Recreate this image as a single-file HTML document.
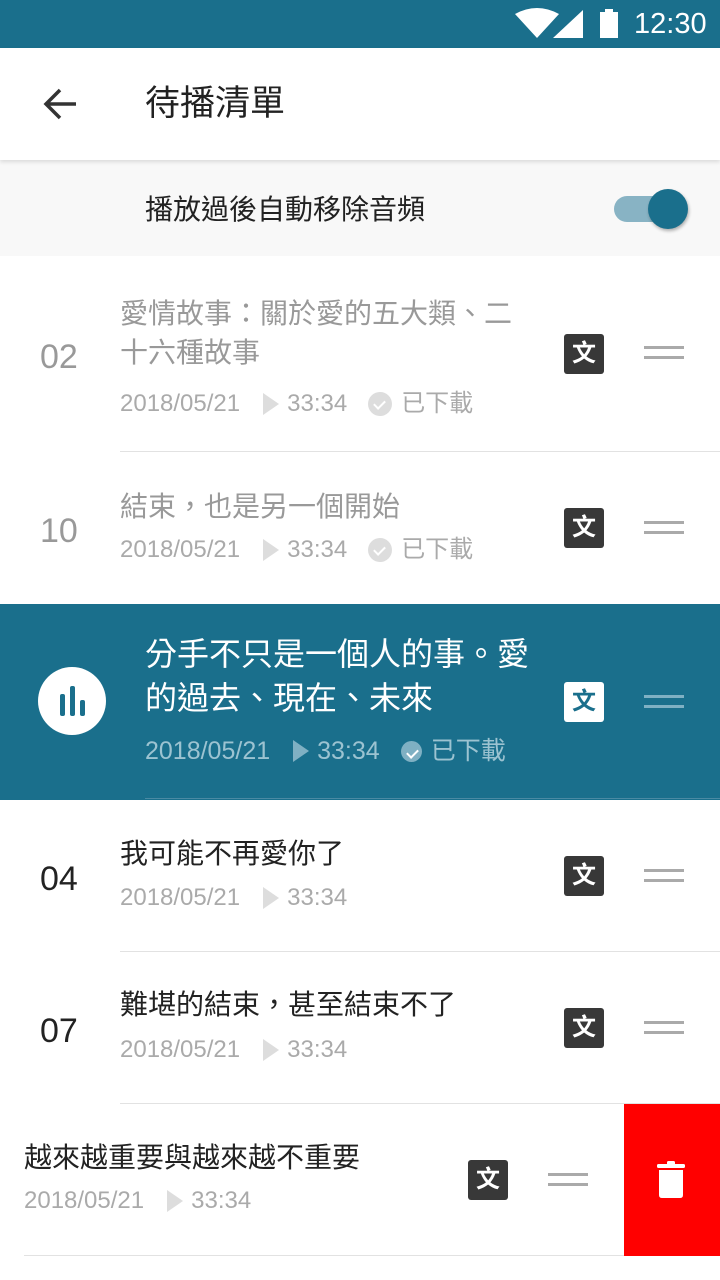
<!DOCTYPE html>
<html><head><meta charset="utf-8">
<style>
*{margin:0;padding:0;box-sizing:border-box}
body{width:720px;height:1280px;position:relative;overflow:hidden;background:#fff;font-family:"Liberation Sans","Noto Sans CJK TC",sans-serif}
.a{position:absolute;white-space:nowrap}
.t{font-size:28px;line-height:39px}
.m{font-size:24px;line-height:30px;color:#aaa;display:flex;align-items:center}
.num{font-size:34px;line-height:40px}
.wen{position:absolute;width:40px;height:40px;background:#383838;border-radius:3px;color:#fff;font-size:24px;font-weight:bold;text-align:center;line-height:40px}
.drag{position:absolute;width:40px;height:13px;border-top:3px solid #aaa;border-bottom:3px solid #aaa}
.div{position:absolute;height:1px;background:#e2e2e2}
.play{display:inline-block;width:0;height:0;border-left:16px solid #ddd;border-top:11px solid transparent;border-bottom:11px solid transparent;margin:0 8px 0 23px}
.chk{display:inline-block;width:24px;height:24px;border-radius:50%;background:#ddd;margin:0 9px 0 21px;position:relative}
.chk:after{content:"";position:absolute;left:8px;top:6px;width:5px;height:9px;border:solid #fff;border-width:0 2px 2px 0;transform:rotate(45deg)}
</style></head><body>
<div class="a" style="left:0;top:0;width:720px;height:48px;background:#1a6f8c"></div>
<svg class="a" style="left:510px;top:8px" width="200" height="32">
<path d="M5 6 Q27 -6 49 6 L27 30 Z" fill="#fff"/>
<path d="M43 30 L73 30 L73 2 Z" fill="#fff"/>
<rect x="90" y="4" width="18" height="26" fill="#fff"/><rect x="95" y="1" width="8" height="4" fill="#fff"/>
</svg>
<div class="a" style="left:634px;top:6px;font-size:29px;color:#fff;line-height:36px">12:30</div>
<div class="a" style="left:0;top:48px;width:720px;height:112px;background:#fff;box-shadow:0 2px 4px rgba(0,0,0,.12);z-index:2"></div>
<svg class="a" style="left:40px;top:86px;z-index:3" width="40" height="36"><path d="M36 18 H6 M20 4 L6 18 L20 32" stroke="#333" stroke-width="3.5" fill="none"/></svg>
<div class="a" style="left:145px;top:81px;font-size:35px;line-height:46px;color:#222;z-index:3">待播清單</div>
<div class="a" style="left:0;top:160px;width:720px;height:96px;background:#f8f8f8"></div>
<div class="a" style="left:145px;top:192px;font-size:28px;line-height:36px;color:#222">播放過後自動移除音頻</div>
<div class="a" style="left:614px;top:196px;width:56px;height:26px;border-radius:13px;background:#88b3c4"></div>
<div class="a" style="left:648px;top:189px;width:40px;height:40px;border-radius:50%;background:#1a6f8c;box-shadow:1px 2px 3px rgba(0,0,0,.3)"></div>

<div class="a num" style="left:40px;top:337px;color:#999">02</div>
<div class="a t" style="left:120px;top:294px;color:#999">愛情故事：關於愛的五大類、二<br>十六種故事</div>
<div class="a m" style="left:120px;top:389px">2018/05/21<span class="play"></span>33:34<span class="chk"></span>已下載</div>
<div class="wen" style="left:564px;top:334px">文</div><div class="drag" style="left:644px;top:346px"></div>
<div class="div" style="left:120px;top:451px;width:600px"></div>

<div class="a num" style="left:40px;top:511px;color:#999">10</div>
<div class="a t" style="left:120px;top:487px;color:#999">結束，也是另一個開始</div>
<div class="a m" style="left:120px;top:535px">2018/05/21<span class="play"></span>33:34<span class="chk"></span>已下載</div>
<div class="wen" style="left:564px;top:508px">文</div><div class="drag" style="left:644px;top:521px"></div>

<div class="a" style="left:0;top:604px;width:720px;height:196px;background:#1a6f8c"></div>
<div class="a" style="left:38px;top:667px;width:68px;height:68px;border-radius:50%;background:#fff"></div>
<div class="a" style="left:60px;top:694px;width:5px;height:22px;border-radius:2px;background:#1a6f8c"></div>
<div class="a" style="left:70px;top:686px;width:5px;height:30px;border-radius:2px;background:#1a6f8c"></div>
<div class="a" style="left:80px;top:700px;width:5px;height:16px;border-radius:2px;background:#1a6f8c"></div>
<div class="a" style="left:145px;top:632px;font-size:32px;line-height:44px;color:#fff">分手不只是一個人的事。愛<br>的過去、現在、未來</div>
<div class="a m" style="left:145px;top:736px;color:#9cc3d1;font-size:25px">2018/05/21<span class="play" style="border-left-color:#7fb0c3"></span>33:34<span class="chk" style="background:#7fb0c3;width:21px;height:21px"></span>已下載</div>
<div class="wen" style="left:564px;top:682px;background:#fff;color:#1a6f8c">文</div><div class="drag" style="left:644px;top:695px;border-color:#7fb0c3"></div>
<div class="div" style="left:145px;top:798px;width:575px;background:#4a8aa3"></div>

<div class="a num" style="left:40px;top:859px;color:#222">04</div>
<div class="a t" style="left:120px;top:834px;color:#222">我可能不再愛你了</div>
<div class="a m" style="left:120px;top:883px">2018/05/21<span class="play"></span>33:34</div>
<div class="wen" style="left:564px;top:856px">文</div><div class="drag" style="left:644px;top:869px"></div>
<div class="div" style="left:120px;top:951px;width:600px"></div>

<div class="a num" style="left:40px;top:1011px;color:#222">07</div>
<div class="a t" style="left:120px;top:985px;color:#222">難堪的結束，甚至結束不了</div>
<div class="a m" style="left:120px;top:1035px">2018/05/21<span class="play"></span>33:34</div>
<div class="wen" style="left:564px;top:1008px">文</div><div class="drag" style="left:644px;top:1021px"></div>
<div class="div" style="left:120px;top:1103px;width:600px"></div>

<div class="a t" style="left:24px;top:1138px;color:#222">越來越重要與越來越不重要</div>
<div class="a m" style="left:24px;top:1186px">2018/05/21<span class="play"></span>33:34</div>
<div class="wen" style="left:468px;top:1160px">文</div><div class="drag" style="left:548px;top:1173px"></div>
<div class="div" style="left:24px;top:1255px;width:600px"></div>
<div class="a" style="left:624px;top:1104px;width:96px;height:152px;background:#f00"></div>
<svg class="a" style="left:656px;top:1160px" width="32" height="40"><rect x="1" y="4" width="28" height="4" rx="1.5" fill="#fff"/><rect x="11" y="1" width="8" height="4" rx="1.5" fill="#fff"/><path d="M3 10 H27 V35 Q27 38 24 38 H6 Q3 38 3 35 Z" fill="#fff"/></svg>
</body></html>
